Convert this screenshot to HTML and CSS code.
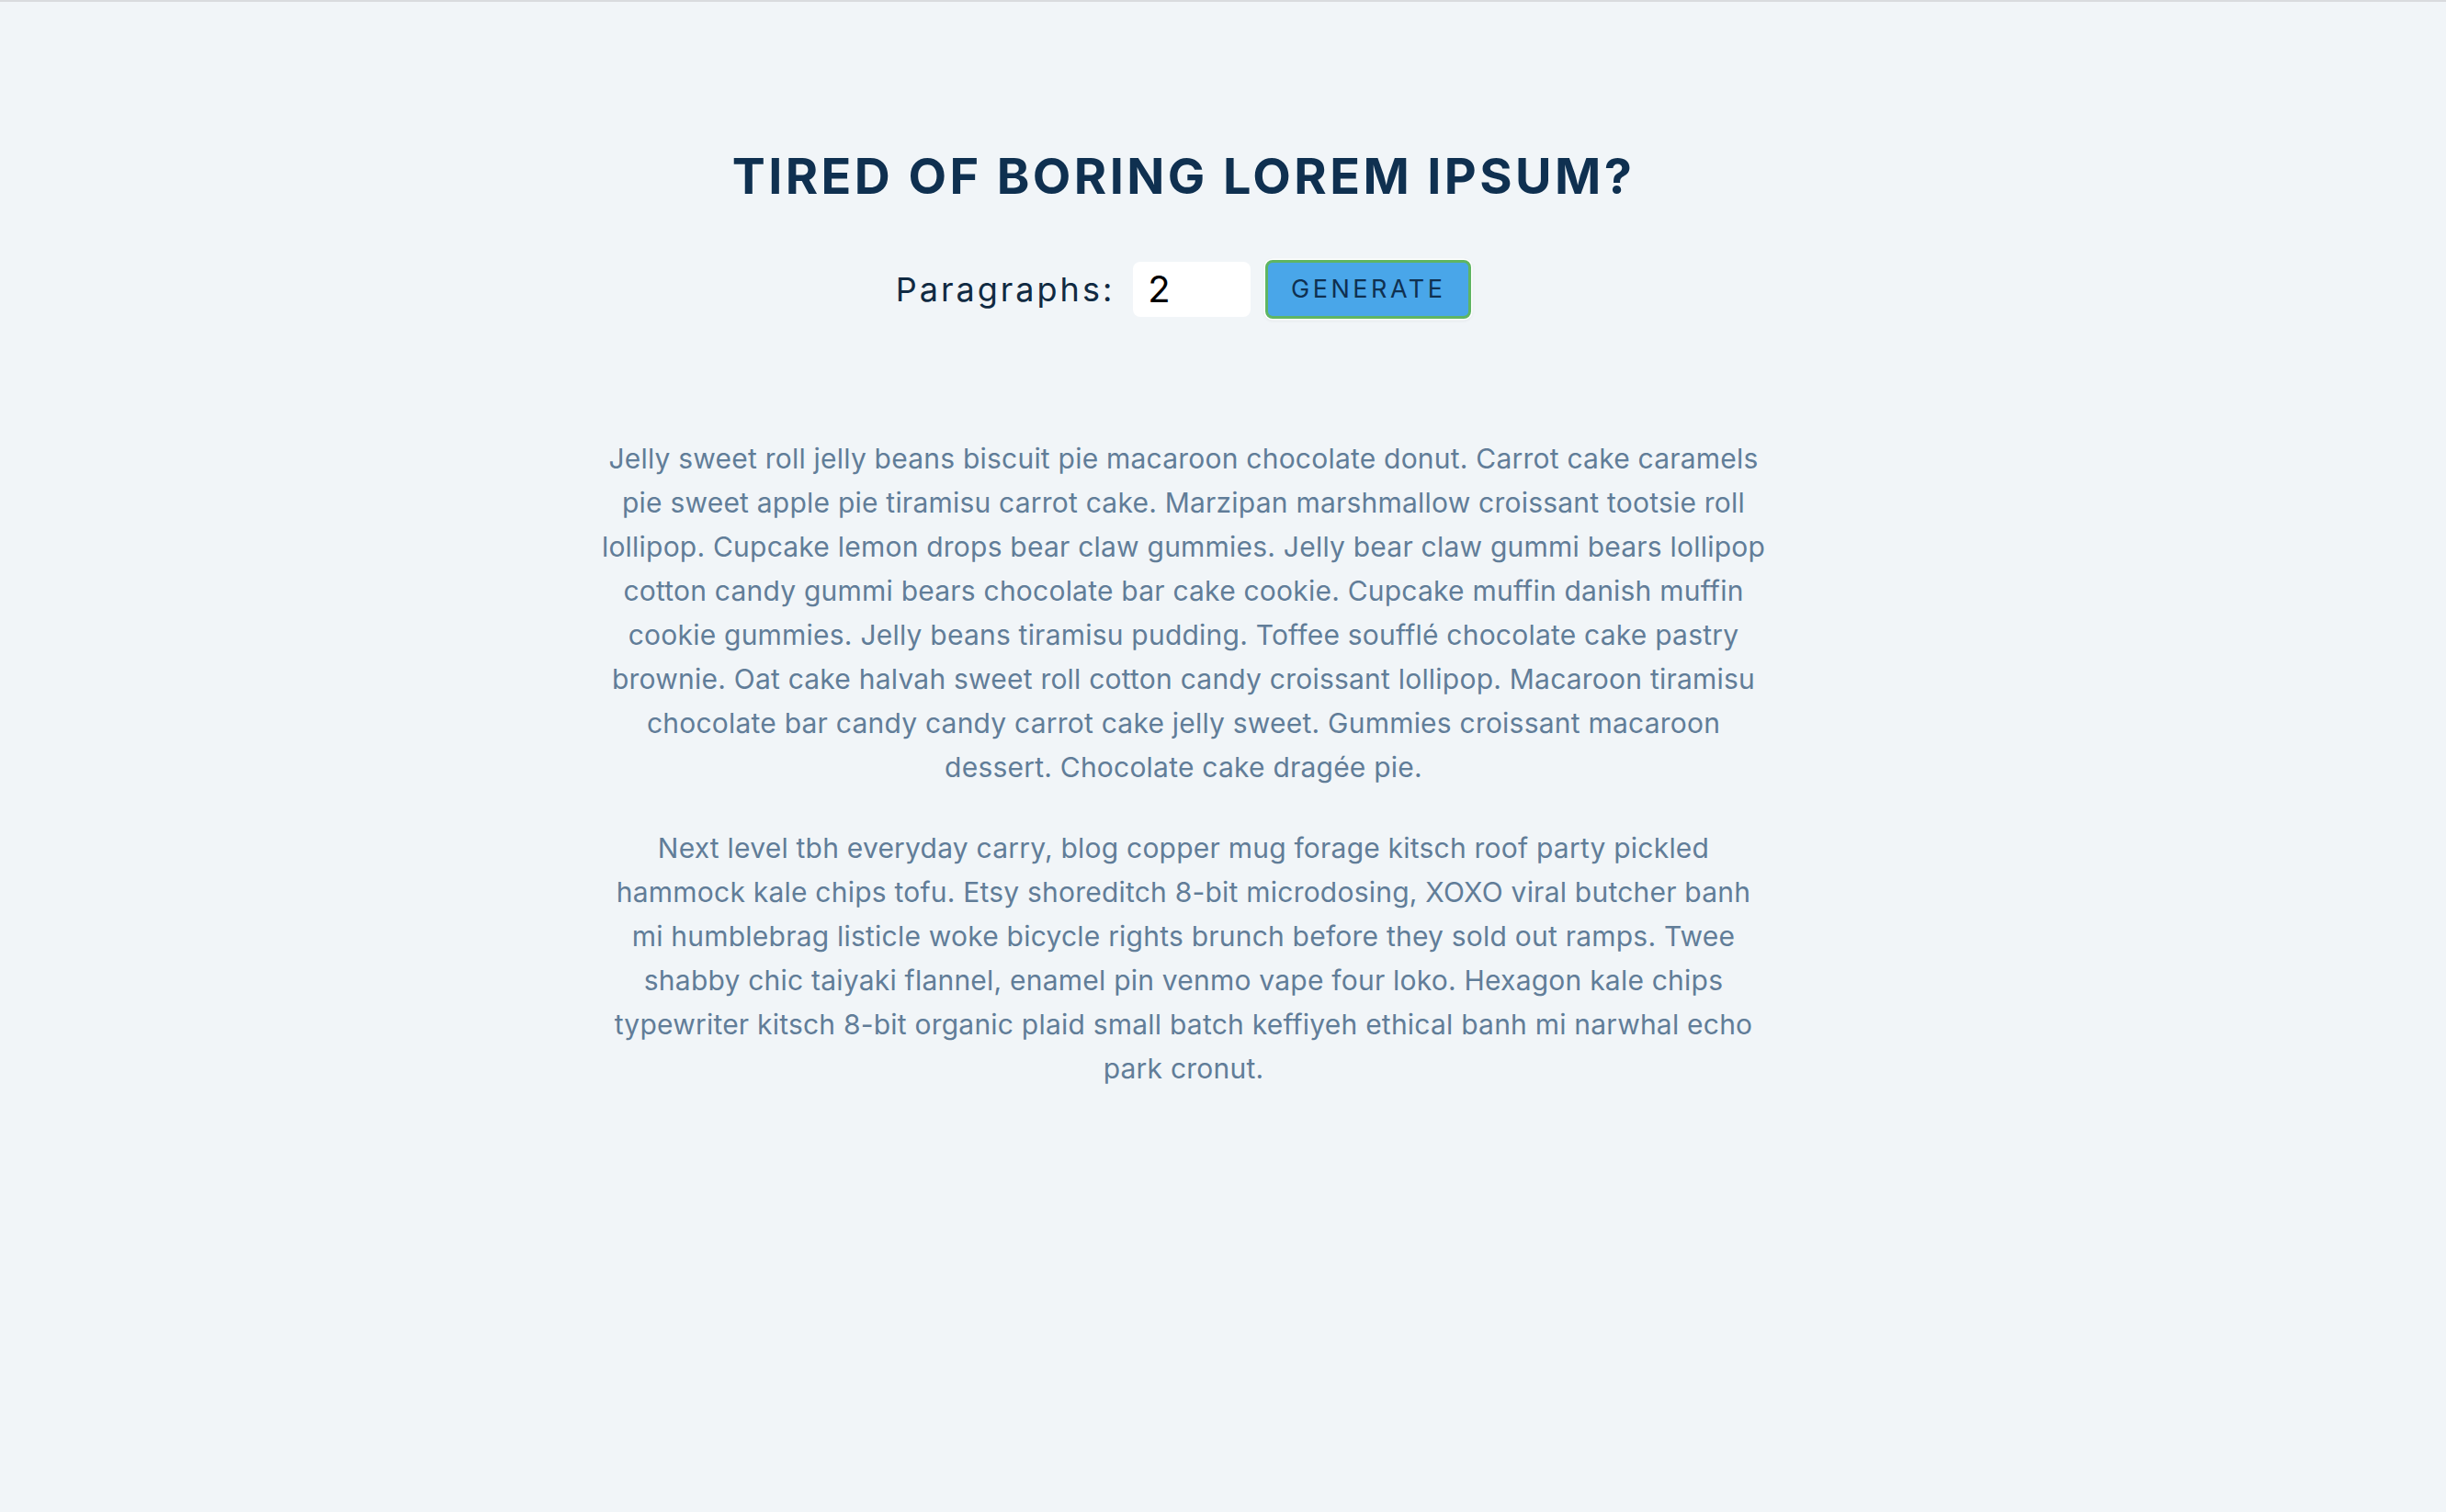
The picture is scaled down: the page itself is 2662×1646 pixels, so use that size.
FILE: index.html
```html
<!DOCTYPE html>
<html lang="en">
<head>
<meta charset="utf-8">
<title>Lorem Ipsum Generator</title>
<link rel="stylesheet" href="styles.css">
</head>
<body>
<div class="topline"></div>
<main class="section-center">
  <h1 class="title">Tired of boring lorem ipsum?</h1>
  <form class="lorem-form">
    <label class="form-label" for="amount">Paragraphs:</label>
    <input class="amount" type="number" id="amount" value="2">
    <button class="btn" type="submit">Generate</button>
  </form>
  <article class="result">
    <p>Jelly sweet roll jelly beans biscuit pie macaroon chocolate donut. Carrot cake caramels pie sweet apple pie tiramisu carrot cake. Marzipan marshmallow croissant tootsie roll lollipop. Cupcake lemon drops bear claw gummies. Jelly bear claw gummi bears lollipop cotton candy gummi bears chocolate bar cake cookie. Cupcake muffin danish muffin cookie gummies. Jelly beans tiramisu pudding. Toffee soufflé chocolate cake pastry brownie. Oat cake halvah sweet roll cotton candy croissant lollipop. Macaroon tiramisu chocolate bar candy candy carrot cake jelly sweet. Gummies croissant macaroon dessert. Chocolate cake dragée pie.</p>
    <p>Next level tbh everyday carry, blog copper mug forage kitsch roof party pickled hammock kale chips tofu. Etsy shoreditch 8-bit microdosing, XOXO viral butcher banh mi humblebrag listicle woke bicycle rights brunch before they sold out ramps. Twee shabby chic taiyaki flannel, enamel pin venmo vape four loko. Hexagon kale chips typewriter kitsch 8-bit organic plaid small batch keffiyeh ethical banh mi narwhal echo park cronut.</p>
  </article>
</main>
</body>
</html>
```
FILE: styles.css
```css
* { box-sizing: border-box; }
html, body { margin: 0; padding: 0; }
body {
  background: #f1f5f8;
  font-family: Inter, "Noto Sans", sans-serif;
  color: #102a42;
  min-height: 100vh;
  padding-right: 86px;
}
.topline {
  height: 2px;
  background: #d9dbde;
  margin-right: -86px;
}
.section-center {
  width: 1270px;
  margin: 0 auto;
  padding-top: 156px;
  text-align: center;
}
.title {
  margin: 0;
  font-size: 54px;
  line-height: 1.25;
  font-weight: 700;
  letter-spacing: 3.4px;
  text-transform: uppercase;
  color: #0f3050;
}
.lorem-form {
  display: flex;
  justify-content: center;
  align-items: center;
  margin-top: 57px;
  margin-bottom: 128px;
}
.form-label {
  font-size: 36px;
  letter-spacing: 3px;
  color: #102a42;
  margin-right: 20px;
}
.amount {
  width: 128px;
  height: 60px;
  border: none;
  border-radius: 8px;
  background: #fff;
  padding: 0 16px;
  font-family: Inter, sans-serif;
  font-size: 40px;
  color: #000;
  margin-right: 16px;
  -moz-appearance: textfield;
}
.amount::-webkit-inner-spin-button,
.amount::-webkit-outer-spin-button { -webkit-appearance: none; margin: 0; }
.btn {
  height: 64px;
  width: 224px;
  padding: 0;
  background: #49a6e9;
  color: #0f3050;
  border: 3px solid #5fb562;
  border-radius: 8px;
  box-shadow: 0 0 0 1.5px #ffffff, 0 1px 4px rgba(0,0,0,0.12);
  font-family: Inter, sans-serif;
  font-size: 27px;
  letter-spacing: 3.5px;
  text-transform: uppercase;
  cursor: pointer;
}
.result p {
  margin: 0 0 40px;
  font-size: 30px;
  line-height: 48px;
  letter-spacing: 0.22px;
  color: #617d98;
}
```
